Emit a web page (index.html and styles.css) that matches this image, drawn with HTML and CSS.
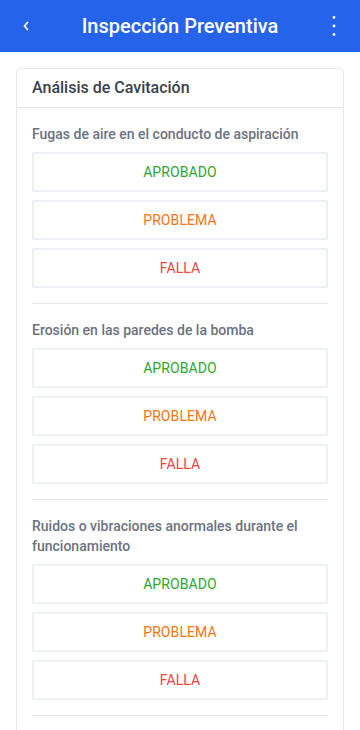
FILE: index.html
```html
<!DOCTYPE html>
<html lang="es">
<head>
<meta charset="utf-8">
<meta name="viewport" content="width=device-width, initial-scale=1">
<title>Inspección Preventiva</title>
<link rel="stylesheet" href="styles.css">
</head>
<body>
<header class="topbar">
  <button class="icon-btn back" aria-label="Volver">
    <svg width="8" height="10" viewBox="0 0 8 10"><path d="M5.5 1.5 L2.5 5 L5.5 8.5" fill="none" stroke="#fff" stroke-width="1.8" stroke-linecap="round" stroke-linejoin="round"/></svg>
  </button>
  <h1 class="title">Inspección Preventiva</h1>
  <button class="icon-btn menu" aria-label="Más opciones">
    <svg width="6" height="24" viewBox="0 0 6 24"><circle cx="3" cy="3.5" r="1.4" fill="#fff"/><circle cx="3" cy="12" r="1.4" fill="#fff"/><circle cx="3" cy="20.5" r="1.4" fill="#fff"/></svg>
  </button>
</header>
<main class="content">
  <section class="card">
    <div class="card-header">Análisis de Cavitación</div>
    <div class="item">
      <p class="question">Fugas de aire en el conducto de aspiración</p>
      <div class="options">
        <button class="opt ok">APROBADO</button>
        <button class="opt warn">PROBLEMA</button>
        <button class="opt fail">FALLA</button>
      </div>
    </div>
    <div class="item">
      <p class="question">Erosión en las paredes de la bomba</p>
      <div class="options">
        <button class="opt ok">APROBADO</button>
        <button class="opt warn">PROBLEMA</button>
        <button class="opt fail">FALLA</button>
      </div>
    </div>
    <div class="item">
      <p class="question">Ruidos o vibraciones anormales durante el funcionamiento</p>
      <div class="options">
        <button class="opt ok">APROBADO</button>
        <button class="opt warn">PROBLEMA</button>
        <button class="opt fail">FALLA</button>
      </div>
    </div>
  </section>
</main>
</body>
</html>
```

FILE: styles.css
```css
* { box-sizing: border-box; }
html, body { margin: 0; padding: 0; background: #fff; }
body {
  font-family: Roboto, "Liberation Sans", Arial, sans-serif;
  color: #374151;
}
.topbar {
  height: 52px;
  background: #2563eb;
  display: flex;
  align-items: center;
  justify-content: space-between;
  padding: 0 16px;
}
.icon-btn {
  background: none;
  border: 0;
  padding: 0;
  width: 20px;
  height: 24px;
  display: flex;
  align-items: center;
  cursor: pointer;
}
.back { justify-content: flex-end; padding-right: 6px; }
.menu { justify-content: flex-end; padding-right: 7px; }
.title {
  margin: 0;
  color: #fff;
  font-size: 20px;
  font-weight: 500;
  line-height: 24px;
}
.content { padding: 16px 16px 0; }
.card {
  border: 1px solid #e5e7eb;
  border-radius: 4px;
  background: #fff;
  padding-bottom: 40px;
}
.card-header {
  padding: 9px 15px;
  font-size: 16px;
  line-height: 20px;
  font-weight: 500;
  color: #374151;
  border-bottom: 1px solid #e5e7eb;
}
.item {
  margin: 0 15px;
  padding: 16px 0 15px;
  border-bottom: 1px solid #e5e7eb;
}
.question {
  margin: 0 0 8px;
  font-size: 14px;
  line-height: 20px;
  font-weight: 500;
  color: #6b7280;
}
.options {
  display: flex;
  flex-direction: column;
  gap: 8px;
}
.opt {
  height: 40px;
  background: #fff;
  border: 2px solid #edf1f6;
  border-radius: 1px;
  font-family: inherit;
  font-size: 14px;
  font-weight: 400;
  letter-spacing: 0.1px;
}
.ok { color: #2ea52f; }
.warn { color: #f97316; }
.fail { color: #ef4444; }
```
